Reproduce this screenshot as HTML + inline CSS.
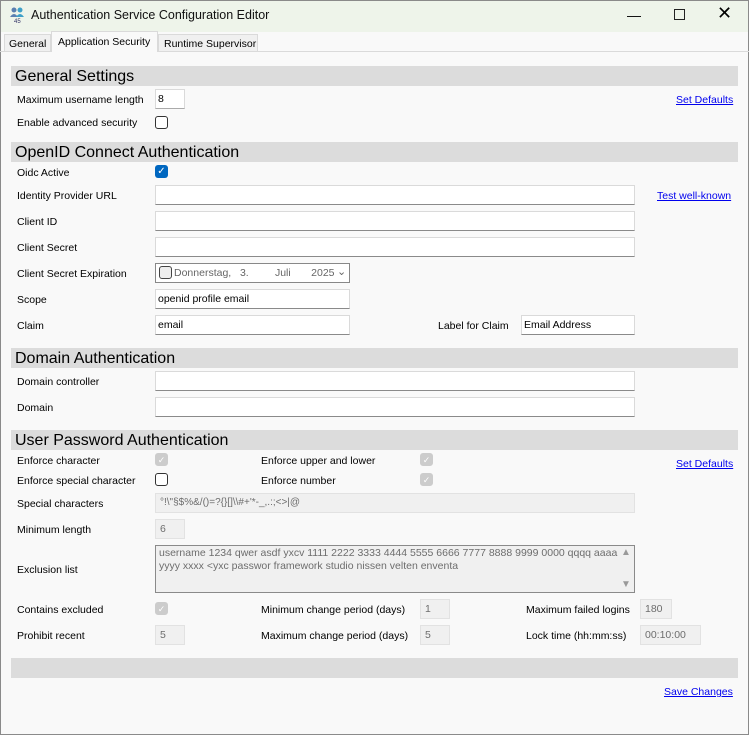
<!DOCTYPE html><html><head><style>
*{box-sizing:border-box;margin:0;padding:0}
body{width:749px;height:735px;background:#f9f9f9;font-family:"Liberation Sans",sans-serif;font-size:10.5px;color:#000;position:relative;overflow:hidden}
.a{position:absolute;white-space:nowrap}
.win{position:absolute;left:0;top:0;width:749px;height:735px;border:1px solid #8a8a8a}
.title{position:absolute;left:1px;top:1px;width:747px;height:31px;background:#eef4ea}
.bar{position:absolute;left:11px;width:727px;height:20px;background:#dcdcdc;font-size:16px;padding-left:4px;line-height:21px}
.in{position:absolute;height:20px;background:#fff;border:1px solid #dadada;border-bottom:1px solid #8a8a8a;padding-left:2px;line-height:18px}
.dis{position:absolute;height:20px;background:#f0f0f0;border:1px solid #e2e2e2;padding-left:4px;line-height:18px;color:#6d6d6d}
.cb{position:absolute;width:13px;height:13px;border:1px solid #333;border-radius:3px;background:#fff}
.cbd{position:absolute;width:13px;height:13px;border:1px solid #ccc;border-radius:3px;background:#ccc;color:#fff;font-size:9px;text-align:center;line-height:12px}
.lnk{position:absolute;color:#0000ee;text-decoration:underline}
</style></head><body>
<div class="win"></div>
<div class="title"></div>
<svg class="a" style="left:9px;top:6px" width="16" height="18"><circle cx="5" cy="4" r="2.5" fill="#5a7fb0"/><path d="M1 11 Q5 5 9 11Z" fill="#5a7fb0"/><circle cx="11" cy="4" r="2.5" fill="#3ea0c8"/><path d="M7 11 Q11 5 15 11Z" fill="#3ea0c8"/><text x="5" y="17" font-size="6" fill="#336">45</text></svg>
<div class="a" style="left:31px;top:8px;font-size:12.5px;color:#111">Authentication Service Configuration Editor</div>
<div class="a" style="left:627px;top:7px;font-size:14px">&#8212;</div>
<div class="a" style="left:674px;top:9px;width:11px;height:11px;border:1px solid #222"></div>
<div class="a" style="left:717px;top:3px;font-size:18px">&#10005;</div>
<div class="a" style="left:0;top:51px;width:749px;height:1px;background:#dadada"></div>
<div class="a" style="left:4px;top:34px;width:47px;height:18px;border:1px solid #dadada;background:#f0f0f0;padding:3px 0 0 4px">General</div>
<div class="a" style="left:51px;top:31px;width:107px;height:21px;border:1px solid #dadada;border-bottom:none;background:#f9f9f9;padding:4px 0 0 6px">Application Security</div>
<div class="a" style="left:158px;top:34px;width:100px;height:18px;border:1px solid #dadada;background:#f0f0f0;padding:3px 0 0 5px">Runtime Supervisor</div>

<div class="bar" style="top:66px">General Settings</div>
<div class="a" style="left:17px;top:94px">Maximum username length</div>
<div class="in" style="left:155px;top:89px;width:30px;border-bottom-color:#aaa">8</div>
<div class="lnk" style="left:676px;top:94px">Set Defaults</div>
<div class="a" style="left:17px;top:117px">Enable advanced security</div>
<div class="cb" style="left:155px;top:116px"></div>

<div class="bar" style="top:142px">OpenID Connect Authentication</div>
<div class="a" style="left:17px;top:167px">Oidc Active</div>
<div class="a" style="left:155px;top:165px;width:13px;height:13px;background:#0067c0;border-radius:3px;color:#fff;font-size:10px;text-align:center;line-height:13px">&#10003;</div>
<div class="a" style="left:17px;top:190px">Identity Provider URL</div>
<div class="in" style="left:155px;top:185px;width:480px"></div>
<div class="lnk" style="left:657px;top:190px">Test well-known</div>
<div class="a" style="left:17px;top:216px">Client ID</div>
<div class="in" style="left:155px;top:211px;width:480px"></div>
<div class="a" style="left:17px;top:242px">Client Secret</div>
<div class="in" style="left:155px;top:237px;width:480px"></div>
<div class="a" style="left:17px;top:268px">Client Secret Expiration</div>
<div class="a" style="left:155px;top:263px;width:195px;height:20px;border:1px solid #888;background:#fff"></div>
<div class="a" style="left:159px;top:266px;width:13px;height:13px;border:1px solid #444;border-radius:3px;background:#eee"></div>
<div class="a" style="left:174px;top:267px;color:#666">Donnerstag,&nbsp;&nbsp;&nbsp;3.&nbsp;&nbsp;&nbsp;&nbsp;&nbsp;&nbsp;&nbsp;&nbsp;&nbsp;Juli&nbsp;&nbsp;&nbsp;&nbsp;&nbsp;&nbsp;&nbsp;2025</div>
<div class="a" style="left:337px;top:265px;color:#666;font-size:11px">&#8964;</div>
<div class="a" style="left:17px;top:294px">Scope</div>
<div class="in" style="left:155px;top:289px;width:195px">openid profile email</div>
<div class="a" style="left:17px;top:320px">Claim</div>
<div class="in" style="left:155px;top:315px;width:195px">email</div>
<div class="a" style="left:438px;top:320px">Label for Claim</div>
<div class="in" style="left:521px;top:315px;width:114px">Email Address</div>

<div class="bar" style="top:348px">Domain Authentication</div>
<div class="a" style="left:17px;top:376px">Domain controller</div>
<div class="in" style="left:155px;top:371px;width:480px"></div>
<div class="a" style="left:17px;top:402px">Domain</div>
<div class="in" style="left:155px;top:397px;width:480px"></div>

<div class="bar" style="top:430px">User Password Authentication</div>
<div class="a" style="left:17px;top:455px">Enforce character</div>
<div class="cbd" style="left:155px;top:453px">&#10003;</div>
<div class="a" style="left:261px;top:455px">Enforce upper and lower</div>
<div class="cbd" style="left:420px;top:453px">&#10003;</div>
<div class="lnk" style="left:676px;top:458px">Set Defaults</div>
<div class="a" style="left:17px;top:475px">Enforce special character</div>
<div class="cb" style="left:155px;top:473px"></div>
<div class="a" style="left:261px;top:475px">Enforce number</div>
<div class="cbd" style="left:420px;top:473px">&#10003;</div>
<div class="a" style="left:17px;top:498px">Special characters</div>
<div class="dis" style="left:155px;top:493px;width:480px;font-size:10px">°!\"§$%&amp;/()=?{}[]\\#+'*-_,.:;&lt;&gt;|@</div>
<div class="a" style="left:17px;top:524px">Minimum length</div>
<div class="dis" style="left:155px;top:519px;width:30px">6</div>
<div class="a" style="left:17px;top:564px">Exclusion list</div>
<div class="a" style="left:155px;top:545px;width:480px;height:48px;background:#f0f0f0;border:1px solid #8a8a8a;color:#6d6d6d;padding:1px 3px;white-space:normal;line-height:13px">username 1234 qwer asdf yxcv 1111 2222 3333 4444 5555 6666 7777 8888 9999 0000 qqqq aaaa yyyy xxxx &lt;yxc passwor framework studio nissen velten enventa</div>
<div class="a" style="left:621px;top:547px;font-size:10px;color:#999">&#9650;</div>
<div class="a" style="left:621px;top:579px;font-size:10px;color:#999">&#9660;</div>
<div class="a" style="left:17px;top:604px">Contains excluded</div>
<div class="cbd" style="left:155px;top:602px">&#10003;</div>
<div class="a" style="left:261px;top:604px">Minimum change period (days)</div>
<div class="dis" style="left:420px;top:599px;width:30px">1</div>
<div class="a" style="left:526px;top:604px">Maximum failed logins</div>
<div class="dis" style="left:640px;top:599px;width:32px">180</div>
<div class="a" style="left:17px;top:630px">Prohibit recent</div>
<div class="dis" style="left:155px;top:625px;width:30px">5</div>
<div class="a" style="left:261px;top:630px">Maximum change period (days)</div>
<div class="dis" style="left:420px;top:625px;width:30px">5</div>
<div class="a" style="left:526px;top:630px">Lock time (hh:mm:ss)</div>
<div class="dis" style="left:640px;top:625px;width:61px">00:10:00</div>

<div class="bar" style="top:658px"></div>
<div class="lnk" style="left:664px;top:686px">Save Changes</div>
</body></html>
